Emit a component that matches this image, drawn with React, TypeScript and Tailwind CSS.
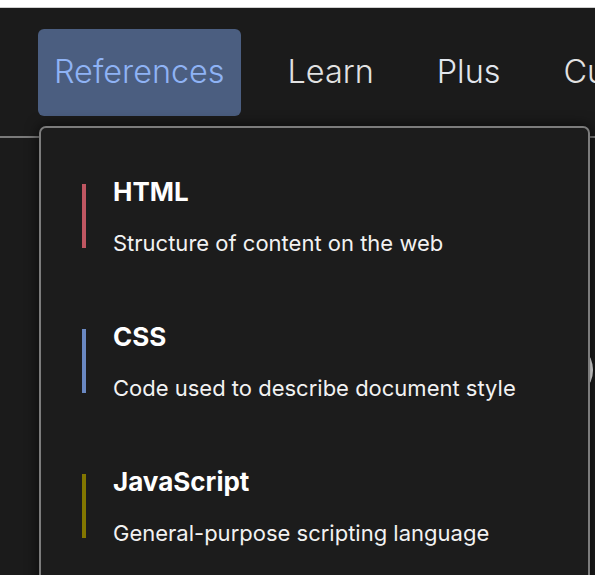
import React from "react";

const items = [
  { title: "HTML", desc: "Structure of content on the web", color: "bg-[#bf5661]" },
  { title: "CSS", desc: "Code used to describe document style", color: "bg-[#6a88c2]" },
  { title: "JavaScript", desc: "General-purpose scripting language", color: "bg-[#827600]" },
];

export default function App() {
  return (
    <div
      className="relative h-[575px] w-[595px] overflow-hidden bg-[#1b1b1b]"
      style={{ fontFamily: "Inter, 'Noto Sans', sans-serif" }}
    >
      {/* browser strip */}
      <div className="h-[7px] bg-white" />
      <div className="h-px bg-[#cfcfcf]" />

      {/* top nav */}
      <header className="box-border flex h-[130px] items-center gap-[31px] border-b-2 border-[#7a7a7a] px-[38px]">
        <a className="flex h-[87px] items-center rounded-[6px] bg-[#4b5e80] px-[16px] text-[32.4px] font-light text-[#8fb3f5]">
          References
        </a>
        <a className="px-[16px] text-[32.4px] font-light text-[#e2e2e2]">Learn</a>
        <a className="px-[16px] text-[32.4px] font-light text-[#e2e6ee]">Plus</a>
        <a className="whitespace-nowrap px-[16px] text-[32.4px] font-light text-[#e2e2e2]">Curriculum</a>
      </header>

      {/* something behind the menu */}
      <div className="absolute left-[533px] top-[340px] h-[60px] w-[60px] rounded-full bg-white" />

      {/* dropdown menu */}
      <div className="absolute left-[39px] top-[126px] h-[520px] w-[551px] rounded-[7px] border-2 border-[#7c7c7c] bg-[#1c1c1c] shadow-[0_0_14px_rgba(0,0,0,0.7)]">
        <ul className="flex flex-col gap-[65px] pl-[41px] pt-[49px]">
          {items.map((it) => (
            <li key={it.title} className="flex items-start gap-[27px]">
              <span className={`mt-[7px] h-[64px] w-[4px] shrink-0 ${it.color}`} />
              <div>
                <div className="text-[26px] font-bold leading-[30px] text-white">{it.title}</div>
                <div className="mt-[22px] text-[22px] leading-[28px] text-[#f2f2f2]">{it.desc}</div>
              </div>
            </li>
          ))}
        </ul>
      </div>
    </div>
  );
}
